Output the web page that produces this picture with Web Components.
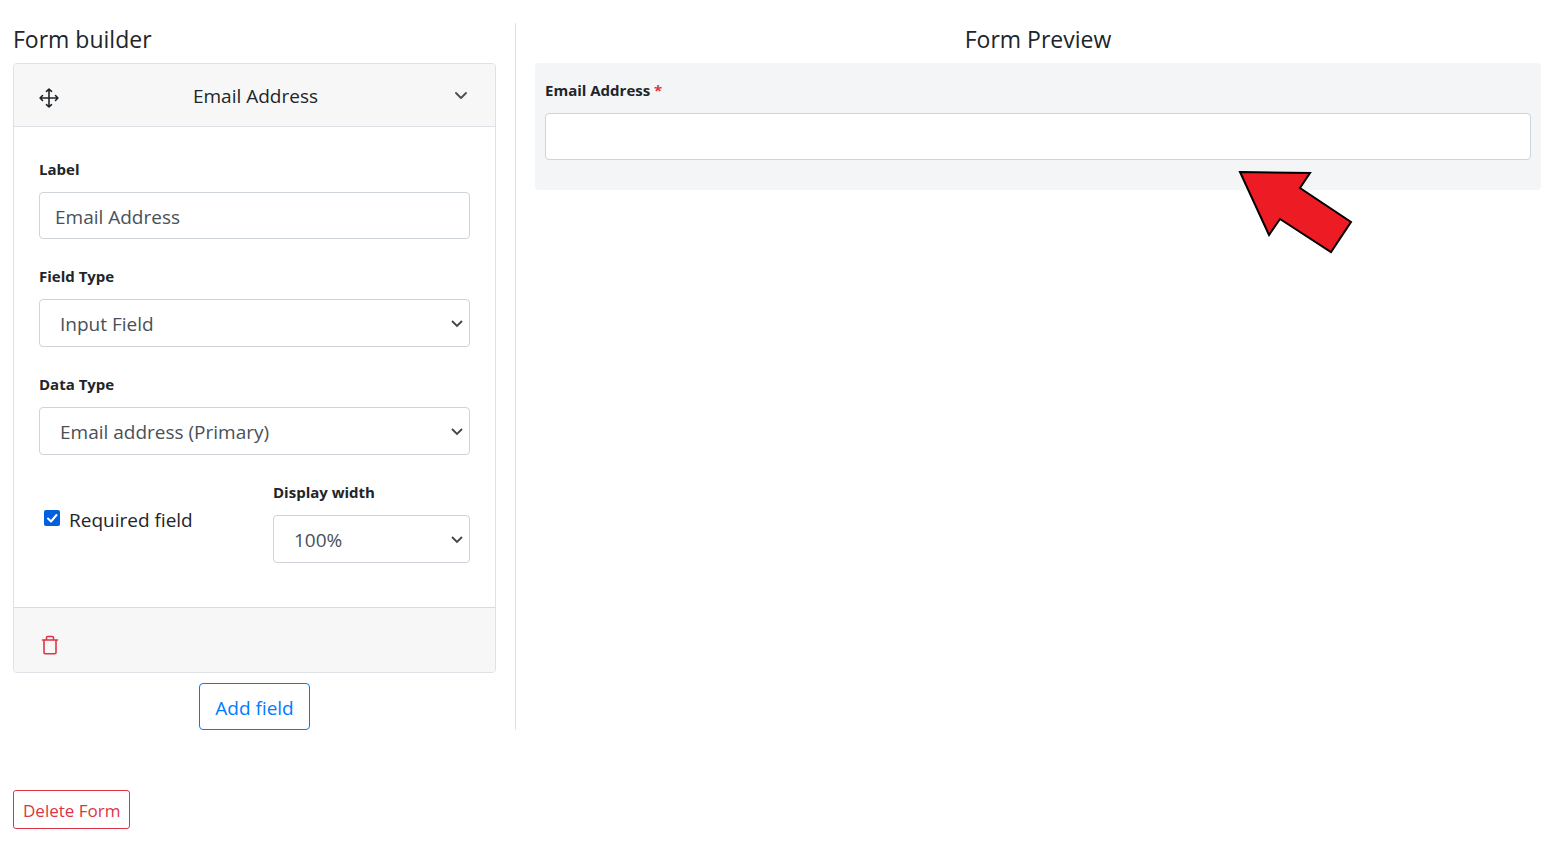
<!DOCTYPE html>
<html lang="en">
<head>
<meta charset="utf-8">
<meta name="viewport" content="width=device-width, initial-scale=1">
<title>Form builder</title>
<style>
  body { margin: 0; background: #fff; color: #212529; font: 19px/28px "Open Sans", "Noto Sans", sans-serif; }
</style>
</head>
<body>
<form-editor>
  <builder-panel slot="builder">
    <field-card name="Email Address">
      <text-field label="Label" value="Email Address"></text-field>
      <select-field label="Field Type" options="Input Field|Text Area|Drop-down"></select-field>
      <select-field label="Data Type" options="Email address (Primary)|First name|Last name"></select-field>
      <field-row>
        <check-field label="Required field"></check-field>
        <select-field label="Display width" options="100%|50%|33%"></select-field>
      </field-row>
    </field-card>
    <action-button slot="actions">Add field</action-button>
  </builder-panel>
  <preview-panel slot="preview">
    <text-field label="Email Address" required></text-field>
  </preview-panel>
  <action-button slot="footer" variant="danger">Delete Form</action-button>
</form-editor>

<script>
const base = '*, *::before, *::after { box-sizing: border-box; }';
const heading = 'h2 { margin: 0; font-size: 23px; line-height: 32px; font-weight: 400; }';
const labelled = `
  label { display: block; margin-bottom: 12px; font-size: 15px; line-height: 22px; font-weight: 700; }
  input, select { display: block; width: 100%; margin: 0; border: 1px solid #ced4da; border-radius: 4px; background: #fff; color: #495057; font: inherit; }`;

class Base extends HTMLElement {
  constructor() {
    super();
    this.attachShadow({ mode: 'open' });
  }
  connectedCallback() {
    this.shadowRoot.innerHTML = `<style>${base}${this.styles()}</style>${this.markup()}`;
  }
}

customElements.define('form-editor', class extends Base {
  styles() { return `
    :host { display: block; padding: 23px 9px 12px 13px; }
    .columns { display: grid; grid-template-columns: minmax(0, 503fr) minmax(0, 1025fr); }
    .footer { margin-top: 60px; }`; }
  markup() { return `
    <main class="columns"><slot name="builder"></slot><slot name="preview"></slot></main>
    <footer class="footer"><slot name="footer"></slot></footer>`; }
});

customElements.define('builder-panel', class extends Base {
  styles() { return `
    :host { display: block; padding-right: 19px; border-right: 1px solid #dee2e6; }
    ${heading}
    h2 { margin-bottom: 8px; }
    .actions { display: flex; justify-content: center; margin-top: 10px; }`; }
  markup() { return `
    <h2>Form builder</h2>
    <slot></slot>
    <div class="actions"><slot name="actions"></slot></div>`; }
});

customElements.define('preview-panel', class extends Base {
  styles() { return `
    :host { display: block; padding-left: 19px; }
    ${heading}
    h2 { margin-bottom: 8px; text-align: center; }
    .sheet { position: relative; padding: 16px 10px 30px; border-radius: 4px; background: #f4f5f7; }
    .pointer { position: absolute; top: 105px; right: 186px; width: 120px; height: 90px; pointer-events: none; }`; }
  markup() { return `
    <h2>Form Preview</h2>
    <div class="sheet">
      <slot></slot>
      <svg class="pointer" viewBox="0 0 120 90" aria-hidden="true">
        <path d="M5 4 75 5 65 20 116 54 96 84 45 51 34 67Z" fill="#ed1c24" stroke="#000" stroke-width="2"/>
      </svg>
    </div>`; }
});

customElements.define('field-card', class extends Base {
  styles() { return `
    :host { display: block; border: 1px solid #dee2e6; border-radius: 4px; background: #fff; overflow: hidden; }
    header, footer { background: #f7f7f7; }
    header { display: grid; grid-template-columns: 26px 1fr 26px; align-items: center; height: 63px; padding: 2px 20px 0 22px; border-bottom: 1px solid #dee2e6; text-align: center; }
    .body { display: grid; gap: 26px; padding: 31px 25px 44px; }
    footer { display: flex; align-items: center; height: 65px; padding: 10px 24px 0; border-top: 1px solid #dcdcdc; }
    button { display: grid; place-items: center; width: 24px; height: 24px; padding: 0; border: 0; background: none; color: #212529; }
    .move { width: 26px; align-items: end; }
    .toggle { color: #495057; }
    .remove { color: #dc3545; }
    svg { display: block; fill: none; stroke: currentColor; stroke-linecap: round; stroke-linejoin: round; }`; }
  markup() { return `
    <header>
      <button class="move" type="button" aria-label="Move field">
        <svg width="20" height="22" viewBox="0 0 20 22" stroke-width="1.6"><path d="M10 3.5v17M1.5 12h17M7.5 5.3 10 3l2.5 2.3M7.5 18.7 10 21l2.5-2.3M3.5 9.5 1.1 12l2.4 2.5M16.5 9.5l2.4 2.5-2.4 2.5"/></svg>
      </button>
      <span>${this.getAttribute('name')}</span>
      <button class="toggle" type="button" aria-label="Collapse field">
        <svg width="14" height="14" viewBox="0 0 14 14" stroke-width="1.9"><path d="m2 4 5 5 5-5"/></svg>
      </button>
    </header>
    <div class="body"><slot></slot></div>
    <footer>
      <button class="remove" type="button" aria-label="Delete field">
        <svg width="18" height="20" viewBox="0 0 18 20" stroke-width="1.6"><path d="M1.5 5h15M3 5v12.5q0 1.2 1.2 1.2h9.6q1.2 0 1.2-1.2V5M5.5 5V2.8q0-1.3 1.3-1.3h4.4q1.3 0 1.3 1.3V5"/></svg>
      </button>
    </footer>`; }
});

customElements.define('field-row', class extends Base {
  styles() { return `
    :host { display: grid; grid-template-columns: minmax(0, 1fr) minmax(0, 1fr); column-gap: 37px; align-items: center; }`; }
  markup() { return '<slot></slot>'; }
});

customElements.define('text-field', class extends Base {
  styles() { return `
    :host { display: block; }
    ${labelled}
    input { height: 47px; padding: 2px 15px 0; }
    .mark { color: #dc3545; }`; }
  markup() {
    const required = this.hasAttribute('required');
    return `
    <label for="control">${this.getAttribute('label')}${required ? ' <span class="mark">*</span>' : ''}</label>
    <input id="control" type="text" value="${this.getAttribute('value') || ''}"${required ? ' required' : ''}>`; }
});

customElements.define('select-field', class extends Base {
  styles() { return `
    :host { display: block; }
    ${labelled}
    .box { display: grid; align-items: center; }
    .box > * { grid-area: 1 / 1; }
    select { appearance: none; height: 48px; padding: 2px 30px 0 20px; }
    svg { justify-self: end; margin-right: 6px; pointer-events: none; }`; }
  markup() { return `
    <label for="control">${this.getAttribute('label')}</label>
    <div class="box">
      <select id="control">${this.getAttribute('options').split('|').map(o => `<option>${o}</option>`).join('')}</select>
      <svg width="14" height="14" viewBox="0 0 14 14" fill="none" stroke="#41464b" stroke-width="1.8" aria-hidden="true"><path d="m2 5 5 5 5-5"/></svg>
    </div>`; }
});

customElements.define('check-field', class extends Base {
  styles() { return `
    :host { display: block; }
    label { display: flex; align-items: center; gap: 9px; padding: 0 0 5px 5px; }
    input { appearance: none; display: grid; width: 16px; height: 16px; margin: 0; border-radius: 2px; background: #0060df; }
    .tick { display: grid; margin-bottom: 4px; }
    .tick > * { grid-area: 1 / 1; }
    svg { pointer-events: none; }`; }
  markup() { return `
    <label>
      <span class="tick"><input type="checkbox" checked><svg width="16" height="16" viewBox="0 0 16 16" fill="none" stroke="#fff" stroke-width="2" stroke-linecap="round" stroke-linejoin="round" aria-hidden="true"><path d="m4 8.5 3 3L12.5 5"/></svg></span>
      <span>${this.getAttribute('label')}</span>
    </label>`; }
});

customElements.define('action-button', class extends Base {
  styles() { return `
    :host { display: inline-block; vertical-align: top; color: #007bff; }
    :host([variant="danger"]) { color: #dc3545; font-size: 17px; }
    button { display: block; height: 47px; padding: 2px 15px 0; border: 1px solid currentColor; border-radius: 4px; background: #fff; color: inherit; font: inherit; }
    :host([variant="danger"]) button { height: 39px; padding: 2px 9px 0; border-radius: 3px; }`; }
  markup() { return '<button type="button"><slot></slot></button>'; }
});
</script>
</body>
</html>
